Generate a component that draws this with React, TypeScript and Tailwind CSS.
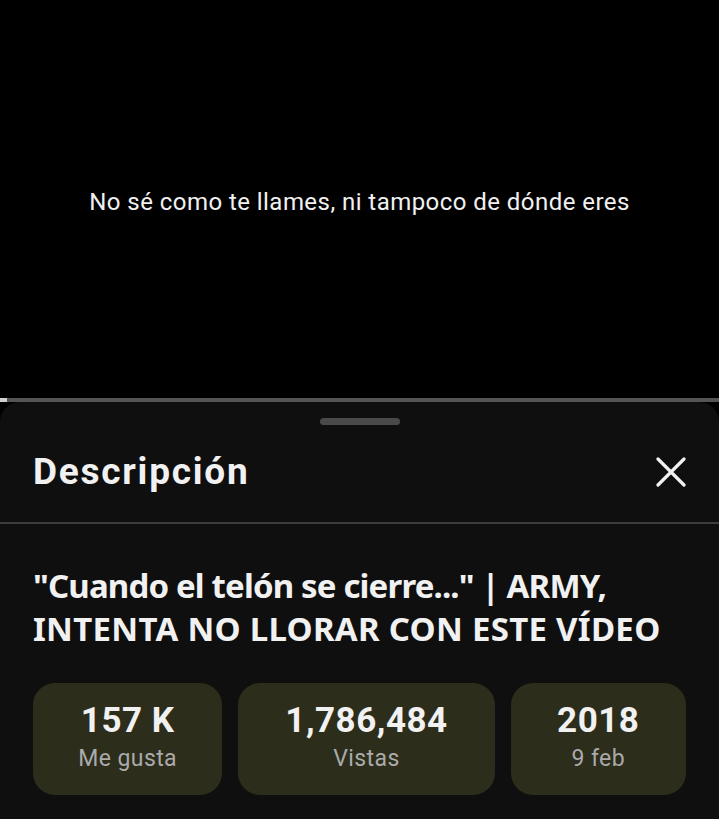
import React from "react";

function Stat({ value, label, w }: { value: string; label: string; w: string }) {
  return (
    <div className={`${w} h-[112px] rounded-[22px] bg-[#2c2d1b] flex flex-col items-center pt-[20px]`}>
      <span className="text-[35px] font-bold text-[#f1f1f1] leading-[36px] tracking-[0.5px]">{value}</span>
      <span className="text-[23px] text-[#aaaaaa] leading-[28px] tracking-[0.4px] mt-[6px]">{label}</span>
    </div>
  );
}

export default function App() {
  return (
    <div className="w-[719px] h-[819px] bg-black overflow-hidden flex flex-col" style={{ fontFamily: "Roboto, 'Noto Sans', sans-serif" }}>
      <div className="h-[398px] flex items-center justify-center">
        <p className="text-[24px] text-[#f1f1f1] mt-[6px] tracking-[0.45px]">No sé como te llames, ni tampoco de dónde eres</p>
      </div>
      <div className="h-[4px] bg-[#555555] flex">
        <div className="w-[7px] bg-[#cfcfcf]" />
      </div>
      <div className="flex-1 bg-[#0f0f0f] rounded-t-[20px] flex flex-col">
        <div className="flex justify-center pt-[16px]">
          <div className="w-[80px] h-[7px] rounded-full bg-[#4a4a4a]" />
        </div>
        <div className="flex items-center justify-between pl-[33px] pr-[32px] h-[97px] pb-[3px]">
          <h2 className="text-[37px] font-bold text-[#f1f1f1] tracking-[1.75px]">Descripción</h2>
          <svg width="30" height="30" viewBox="0 0 30 30" className="mr-[1px]">
            <path d="M2 2 L28 28 M28 2 L2 28" stroke="#f1f1f1" strokeWidth="3.2" strokeLinecap="round" />
          </svg>
        </div>
        <div className="h-[2px] bg-[#3d3d3d]" />
        <div className="px-[33px] pt-[40px]">
          <h1 className="text-[33px] font-bold leading-[43px] text-[#f1f1f1] whitespace-nowrap" style={{ fontFamily: "'Noto Sans', sans-serif" }}>
            <span className="block tracking-[-0.84px]">"Cuando el telón se cierre..." | ARMY,</span>
            <span className="block tracking-[0.28px]">INTENTA NO LLORAR CON ESTE VÍDEO</span>
          </h1>
          <div className="flex gap-[16px] mt-[33px]">
            <Stat w="w-[190px]" value="157 K" label="Me gusta" />
            <Stat w="w-[257px]" value="1,786,484" label="Vistas" />
            <Stat w="w-[176px]" value="2018" label="9 feb" />
          </div>
        </div>
      </div>
    </div>
  );
}
